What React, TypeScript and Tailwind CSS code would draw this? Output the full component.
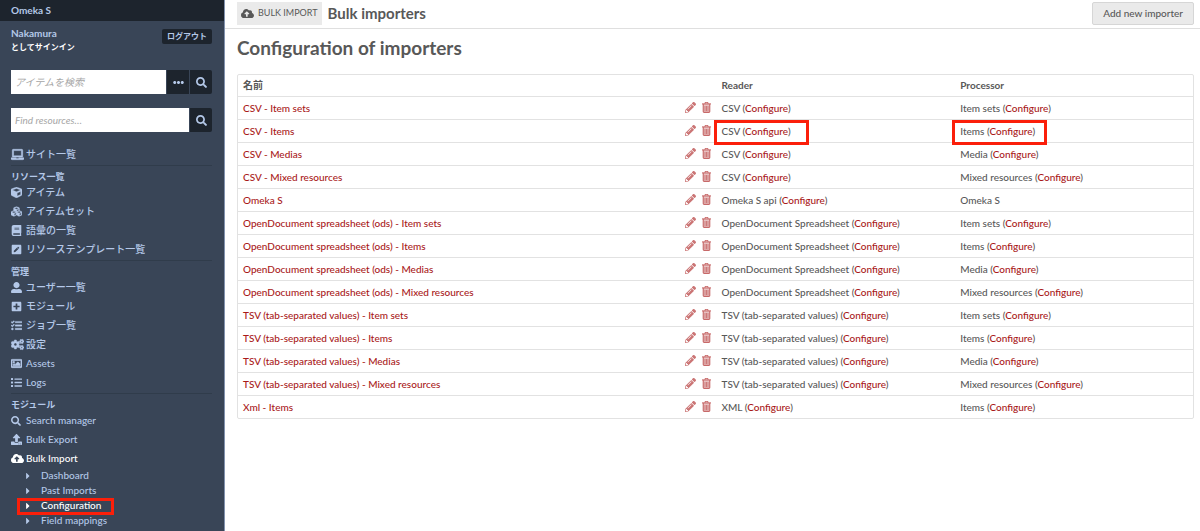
import type { ReactNode } from "react"
import {
  FaBook,
  FaCaretRight,
  FaCloudUploadAlt,
  FaCogs,
  FaCube,
  FaCubes,
  FaEllipsisH,
  FaLaptop,
  FaList,
  FaPencilAlt,
  FaPenSquare,
  FaPlusSquare,
  FaRegImage,
  FaSearch,
  FaTasks,
  FaUpload,
  FaUserAlt,
} from "react-icons/fa"

type NavItem = { label: string; icon: ReactNode; active?: boolean }

const resources: NavItem[] = [
  { label: "アイテム", icon: <FaCube className="stroke-current stroke-[16px]" /> },
  { label: "アイテムセット", icon: <FaCubes className="stroke-current stroke-[16px]" /> },
  { label: "語彙の一覧", icon: <FaBook /> },
  { label: "リソーステンプレート一覧", icon: <FaPenSquare /> },
]

const admin: NavItem[] = [
  { label: "ユーザー一覧", icon: <FaUserAlt /> },
  { label: "モジュール", icon: <FaPlusSquare /> },
  { label: "ジョブ一覧", icon: <FaTasks className="stroke-current stroke-[16px]" /> },
  { label: "設定", icon: <FaCogs className="stroke-current stroke-[24px] text-[13px]" /> },
  { label: "Assets", icon: <FaRegImage className="stroke-current stroke-[32px]" /> },
  { label: "Logs", icon: <FaList /> },
]

const modules: NavItem[] = [
  { label: "Search manager", icon: <FaSearch className="text-[10px]" /> },
  { label: "Bulk Export", icon: <FaUpload /> },
  { label: "Bulk Import", icon: <FaCloudUploadAlt className="text-[13px]" />, active: true },
]

const bulkImportPages = ["Dashboard", "Past Imports", "Configuration", "Field mappings"]

type Importer = { name: string; reader: string; processor: string; marked?: boolean }

const importers: Importer[] = [
  { name: "CSV - Item sets", reader: "CSV", processor: "Item sets" },
  { name: "CSV - Items", reader: "CSV", processor: "Items", marked: true },
  { name: "CSV - Medias", reader: "CSV", processor: "Media" },
  { name: "CSV - Mixed resources", reader: "CSV", processor: "Mixed resources" },
  { name: "Omeka S", reader: "Omeka S api", processor: "Omeka S" },
  { name: "OpenDocument spreadsheet (ods) - Item sets", reader: "OpenDocument Spreadsheet", processor: "Item sets" },
  { name: "OpenDocument spreadsheet (ods) - Items", reader: "OpenDocument Spreadsheet", processor: "Items" },
  { name: "OpenDocument spreadsheet (ods) - Medias", reader: "OpenDocument Spreadsheet", processor: "Media" },
  { name: "OpenDocument spreadsheet (ods) - Mixed resources", reader: "OpenDocument Spreadsheet", processor: "Mixed resources" },
  { name: "TSV (tab-separated values) - Item sets", reader: "TSV (tab-separated values)", processor: "Item sets" },
  { name: "TSV (tab-separated values) - Items", reader: "TSV (tab-separated values)", processor: "Items" },
  { name: "TSV (tab-separated values) - Medias", reader: "TSV (tab-separated values)", processor: "Media" },
  { name: "TSV (tab-separated values) - Mixed resources", reader: "TSV (tab-separated values)", processor: "Mixed resources" },
  { name: "Xml - Items", reader: "XML", processor: "Items" },
]

function TrashIcon() {
  return (
    <svg width="9" height="11" viewBox="0 0 9 11" fill="none" stroke="currentColor" aria-hidden>
      <path d="M0 1.9h9" strokeWidth="1.2" />
      <path d="M3 1.6V.5h3v1.1" strokeWidth="0.9" />
      <path d="M1.2 2.2v7.3q0 .9.9.9h4.8q.9 0 .9-.9V2.2" fill="currentColor" fillOpacity="0.45" strokeWidth="1.1" />
      <path d="M3 4v5M4.5 4v5M6 4v5" strokeWidth="0.7" />
    </svg>
  )
}

function NavLink({ label, icon, active }: NavItem) {
  return (
    <li>
      <a href="#" className={`flex h-[19px] items-center ${active ? "text-white" : ""}`}>
        <span className="w-[15px] shrink-0 text-[11px]">{icon}</span>
        {label}
      </a>
    </li>
  )
}

function NavSection({ title, items, children }: { title: string; items: NavItem[]; children?: ReactNode }) {
  return (
    <section className="border-t border-[#303c4b] pt-1 pb-px">
      <h4 className="text-[9px] leading-[13px] font-bold">{title}</h4>
      <ul>
        {items.map((item) => (
          <NavLink key={item.label} {...item} />
        ))}
      </ul>
      {children}
    </section>
  )
}

function Sidebar() {
  return (
    <aside className="w-[225px] shrink-0 border-r border-[#8292ae] bg-[#394557] text-[10px] text-[#b4c8e8]">
      <div className="flex h-[21px] items-center bg-[#1d242d] px-[11px] font-bold">
        <a href="#">Omeka S</a>
      </div>

      <div className="pr-3 pl-[11px]">
        <div className="flex items-start justify-between pt-1">
          <div>
            <a href="#" className="block leading-4 font-bold">Nakamura</a>
            <p className="text-[8px] leading-3 font-bold text-white">としてサインイン</p>
          </div>
          <button className="mt-1 h-[15px] w-[50px] rounded-xs bg-[#1d242d] text-[8px] leading-[15px] font-bold">
            ログアウト
          </button>
        </div>

        {/* Search forms */}
        <form className="mt-[17px] flex h-6 gap-px">
          <input
            type="text"
            aria-label="アイテムを検索"
            placeholder="アイテムを検索"
            className="min-w-0 flex-1 bg-white px-1 text-[10px] text-[#404040] placeholder:text-[#a6a6a6] placeholder:italic"
          />
          <button type="button" aria-label="詳細" className="flex w-[22px] items-center justify-center bg-[#1d242d] text-[11px]">
            <FaEllipsisH />
          </button>
          <button type="button" aria-label="検索" className="flex w-[22px] items-center justify-center rounded-r-xs bg-[#1d242d] text-[11px]">
            <FaSearch />
          </button>
        </form>
        <form className="mt-3.5 flex h-6 gap-px">
          <input
            type="text"
            aria-label="Find resources"
            placeholder="Find resources…"
            className="min-w-0 flex-1 bg-white px-1 text-[10px] text-[#404040] placeholder:text-[#a6a6a6] placeholder:italic"
          />
          <button type="button" aria-label="Find" className="flex w-[22px] items-center justify-center rounded-r-xs bg-[#1d242d] text-[11px]">
            <FaSearch />
          </button>
        </form>

        <nav className="mt-[13px] font-medium">
          <ul className="pb-px">
            <NavLink label="サイト一覧" icon={<FaLaptop className="stroke-current stroke-[24px] text-[13px]" />} />
          </ul>
          <NavSection title="リソース一覧" items={resources} />
          <NavSection title="管理" items={admin} />
          <NavSection title="モジュール" items={modules}>
            <ul>
              {bulkImportPages.map((page) => (
                <li key={page} className="relative">
                  <a
                    href="#"
                    className={`flex h-[15px] items-center pl-3 ${page === "Configuration" ? "text-white" : ""}`}
                  >
                    <FaCaretRight className="mr-2 w-[10px]" />
                    {page}
                  </a>
                  {page === "Configuration" && (
                    <div className="pointer-events-none absolute top-0 left-[6px] h-[17px] w-[97px] border-3 border-[#fb1f0a]" />
                  )}
                </li>
              ))}
            </ul>
          </NavSection>
        </nav>
      </div>
    </aside>
  )
}

function ConfigureCell({ label, marked }: { label: string; marked?: boolean }) {
  return (
    <td className="relative px-1.5">
      {label}
      {label !== "Omeka S" && (
        <>
          {" ("}
          <a href="#" className="text-[#a91919]">Configure</a>)
        </>
      )}
      {marked && (
        <div className="pointer-events-none absolute top-0 -left-0.5 h-[25px] w-[95px] border-3 border-[#fb1f0a]" />
      )}
    </td>
  )
}

export default function App() {
  return (
    <div className="flex min-h-screen bg-white font-['Lato','Noto_Sans_CJK_JP',sans-serif] text-[#585858]">
      <Sidebar />

      <main className="min-w-0 flex-1">
        <header className="flex h-[29px] items-center border-b border-[#dfdfdf] pr-1.5 pb-0.5 pl-3">
          <a href="#" className="flex h-[23px] items-center gap-1 bg-[#eaeaea] px-1 text-[9px] uppercase">
            <FaCloudUploadAlt className="text-[13px]" />
            Bulk Import
          </a>
          <h1 className="ml-1.5 text-[15px] font-bold">Bulk importers</h1>
          <button className="ml-auto h-[23px] rounded-xs border border-[#d6d6d6] bg-[#eaeaea] px-2.5 text-[10px] font-medium">
            Add new importer
          </button>
        </header>

        <div className="pr-1.5 pl-3">
          <h2 className="pt-[7px] pb-3.5 text-[19px] leading-6 font-bold">Configuration of importers</h2>
          <div className="rounded-xs border border-[#e2e2e2]">
            <table className="w-full table-fixed border-collapse text-left text-[10px] leading-4 font-medium">
              <thead>
                <tr className="h-[21px]">
                  <th className="w-1/2 px-[5px] font-bold">名前</th>
                  <th className="w-1/4 px-1.5 font-bold">Reader</th>
                  <th className="w-1/4 px-1.5 font-bold">Processor</th>
                </tr>
              </thead>
              <tbody>
                {importers.map((importer) => (
                  <tr key={importer.name} className="h-[23px] border-t border-[#e2e2e2]">
                    <td className="pr-[5px] pl-[5px]">
                      <div className="flex items-center justify-between">
                        <a href="#" className="text-[#a91919]">{importer.name}</a>
                        <span className="flex items-center gap-1.5 text-[#a91919]/60">
                          <a href="#" aria-label="Edit"><FaPencilAlt className="text-[11px]" /></a>
                          <a href="#" aria-label="Delete"><TrashIcon /></a>
                        </span>
                      </div>
                    </td>
                    <ConfigureCell label={importer.reader} marked={importer.marked} />
                    <ConfigureCell label={importer.processor} marked={importer.marked} />
                  </tr>
                ))}
              </tbody>
            </table>
          </div>
        </div>
      </main>
    </div>
  )
}
